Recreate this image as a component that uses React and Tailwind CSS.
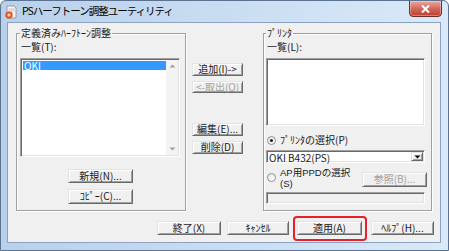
import React from "react";

const raised =
  "bg-[#f0f0f0] border border-t-[#e3e3e3] border-l-[#e3e3e3] border-r-[#696969] border-b-[#696969] shadow-[inset_1px_1px_0_#fff,inset_-1px_-1px_0_#a0a0a0]";
const sunken =
  "border border-t-[#a0a0a0] border-l-[#a0a0a0] border-r-[#fff] border-b-[#fff] shadow-[inset_1px_1px_0_#696969,inset_-1px_-1px_0_#e3e3e3]";

function Btn({ children, className = "", disabled = false }) {
  return (
    <div
      className={`${raised} shrink-0 flex items-center justify-center pb-[1px] text-[10px] leading-none whitespace-nowrap ${
        disabled ? "text-[#a0a0a0]" : "text-[#1a1a1a]"
      } ${className}`}
    >
      {children}
    </div>
  );
}

function Radio({ checked }) {
  return (
    <div className="shrink-0 w-[9px] h-[9px] rounded-full border border-[#8e8f8f] bg-gradient-to-br from-[#e6e6e6] to-white flex items-center justify-center">
      {checked && <div className="w-[3px] h-[3px] rounded-full bg-[#1b1b1b]" />}
    </div>
  );
}

function Tri({ up, color = "#a0a0a0" }) {
  return (
    <svg width="7" height="4" viewBox="0 0 7 4">
      {up ? (
        <path d="M0.5 3.5 L3.5 0.5 L6.5 3.5 Z" fill={color} />
      ) : (
        <path d="M0.5 0.5 L3.5 3.5 L6.5 0.5 Z" fill={color} />
      )}
    </svg>
  );
}

function AppIcon() {
  return (
    <svg width="14" height="14" viewBox="0 0 14 14">
      <path d="M3 1 H10 L12 3 V13 H3 Z" fill="#f4f4f4" stroke="#8a8a8a" strokeWidth="0.8" />
      <path d="M4.5 4 H10.5 M4.5 6 H10.5 M4.5 8 H9" stroke="#b8b8b8" strokeWidth="0.8" />
      <circle cx="5" cy="10" r="3.6" fill="#e5452a" />
      <circle cx="5" cy="10" r="2" fill="#f6a33a" />
      <circle cx="5" cy="10" r="0.9" fill="#fff3c8" />
    </svg>
  );
}

export default function App() {
  return (
    <div className="w-[449px] h-[251px] font-['Noto_Sans_CJK_JP',sans-serif] bg-gradient-to-r from-[#b9d0eb] via-[#c9ddf2] to-[#d9e9f8] border border-[#5b7391] rounded-t-[6px] flex flex-col overflow-hidden">
      {/* title bar */}
      <div className="h-[21px] shrink-0 flex items-start">
        <div className="ml-[3px] mt-[4px]">
          <AppIcon />
        </div>
        <div className="ml-[4px] mt-[3px] text-[10.5px] leading-[14px] text-black tracking-[-1px] whitespace-nowrap">
          PSハーフトーン調整ユーティリティ
        </div>
        <div className="ml-auto mr-[6px] -mt-[1px] w-[33px] h-[17px] rounded-b-[4px] border border-[#6f2b25] bg-gradient-to-b from-[#e8aaa2] via-[#d4685c] to-[#c1392b] shadow-[inset_0_0_0_1px_rgba(255,255,255,0.35)] flex items-center justify-center">
          <svg width="9" height="8" viewBox="0 0 9 8">
            <path d="M1 0.5 L8 7.5 M8 0.5 L1 7.5" stroke="#fff" strokeWidth="2" />
          </svg>
        </div>
      </div>

      {/* client */}
      <div className="ml-[6px] w-[434px] h-[221px] shrink-0 border border-[#8ba3c1] bg-[#f0f0f0] pt-[4px] px-[8px] text-[10px] text-[#1a1a1a]">
        <div className="flex items-start">
          {/* left group */}
          <fieldset className="w-[170px] h-[184px] shrink-0 border border-[#a0a0a0] shadow-[inset_1px_1px_0_#fff,1px_1px_0_#fff] flex flex-col">
            <legend className="ml-[3px] px-[1px] bg-[#f0f0f0] leading-[12px] whitespace-nowrap">
              定義済みﾊｰﾌﾄｰﾝ調整
            </legend>
            <div className="mt-[2px] ml-[4px] leading-[12px]">一覧(T):</div>
            <div className={`${sunken} mt-[5px] ml-[3px] w-[160px] h-[99px] bg-white flex p-[1px]`}>
              <div className="flex-1 pt-[1px] pl-[1px]">
                <div className="h-[9px] bg-[#3399ff] text-white leading-[9px] pl-[1px]">OKI</div>
              </div>
              <div className="w-[12px] bg-[#f3f3f3] flex flex-col items-center justify-between py-[4px]">
                <Tri up />
                <Tri />
              </div>
            </div>
            <Btn className="mt-[12px] ml-[51px] w-[65px] h-[14px]">新規(N)...</Btn>
            <Btn className="mt-[6px] ml-[51px] w-[65px] h-[15px]">ｺﾋﾟｰ(C)...</Btn>
          </fieldset>

          {/* middle buttons */}
          <div className="ml-[6px] mt-[36px] w-[51px] shrink-0 flex flex-col">
            <Btn className="h-[13px]">追加(I)-&gt;</Btn>
            <Btn className="mt-[5px] h-[12px]" disabled>
              &lt;-取出(O)
            </Btn>
            <Btn className="mt-[30px] h-[13px]">編集(E)...</Btn>
            <Btn className="mt-[5px] h-[13px]">削除(D)</Btn>
          </div>

          {/* right group */}
          <fieldset className="ml-[20px] w-[169px] h-[184px] shrink-0 border border-[#a0a0a0] shadow-[inset_1px_1px_0_#fff,1px_1px_0_#fff] flex flex-col">
            <legend className="ml-[2px] px-[1px] bg-[#f0f0f0] leading-[12px] whitespace-nowrap">ﾌﾟﾘﾝﾀ</legend>
            <div className="mt-[2px] ml-[3px] leading-[12px]">一覧(L):</div>
            <div className={`${sunken} mt-[5px] ml-[2px] w-[159px] h-[68px] bg-white`} />
            <div className="mt-[8px] ml-[3px] h-[12px] flex items-center">
              <Radio checked />
              <span className="ml-[4px] leading-[12px] whitespace-nowrap">ﾌﾟﾘﾝﾀの選択(P)</span>
            </div>
            <div className={`${sunken} mt-[4px] ml-[2px] w-[159px] h-[13px] bg-white flex items-stretch p-[1px]`}>
              <div className="flex-1 pl-[1px] leading-[11px] whitespace-nowrap">OKI B432(PS)</div>
              <div className={`${raised} w-[12px] flex items-center justify-center`}>
                <Tri color="#000" />
              </div>
            </div>
            <div className="mt-[3px] ml-[3px] flex items-start">
              <div className="h-[22px] flex items-center">
                <Radio />
              </div>
              <div className="ml-[4px] font-['Liberation_Sans','Noto_Sans_CJK_JP',sans-serif] text-[9.5px] leading-[11px] pt-[1px] whitespace-nowrap">
                AP用PPDの選択
                <br />
                (S)
              </div>
              <Btn className="ml-auto mr-[4px] mt-[6px] w-[65px] h-[15px]" disabled>
                参照(B)...
              </Btn>
            </div>
            <div className={`${sunken} mt-[3px] ml-[2px] w-[159px] h-[12px] bg-[#f0f0f0]`} />
          </fieldset>
        </div>

        {/* bottom buttons */}
        <div className="mt-[10px] ml-[141px] flex items-start">
          <Btn className="w-[64px] h-[14px]">終了(X)</Btn>
          <Btn className="ml-[6px] w-[62px] h-[14px]">ｷｬﾝｾﾙ</Btn>
          <div className="relative ml-[8px] shrink-0">
            <Btn className="w-[65px] h-[14px]">適用(A)</Btn>
            <span className="absolute -left-[4px] -right-[5px] -top-[5px] -bottom-[6px] border-2 border-[#e8202a] rounded-[4px]" />
          </div>
          <Btn className="ml-[9px] w-[63px] h-[14px]">ﾍﾙﾌﾟ(H)...</Btn>
        </div>
      </div>
    </div>
  );
}
